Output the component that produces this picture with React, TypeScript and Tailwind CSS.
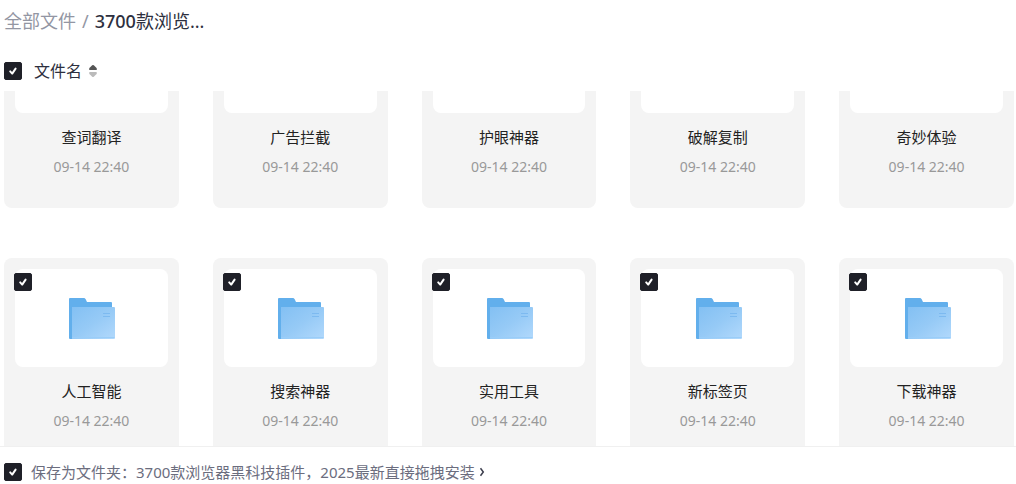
import { useLayoutEffect, useRef, useState } from 'react';

const FOLDERS = [
  '查词翻译', '广告拦截', '护眼神器', '破解复制', '奇妙体验',
  '人工智能', '搜索神器', '实用工具', '新标签页', '下载神器',
];

const SCROLL_START = 87;

interface CheckBoxProps {
  label: string;
  checked: boolean;
  onChange: (checked: boolean) => void;
}

function CheckBox({ label, checked, onChange }: CheckBoxProps) {
  return (
    <span className="relative block w-[18px] h-[18px] shrink-0">
      <input
        type="checkbox"
        aria-label={label}
        checked={checked}
        onChange={e => onChange(e.target.checked)}
        className="peer block w-full h-full appearance-none rounded-xs border border-[#c4c6cf] bg-white checked:border-[#1f2028] checked:bg-[#1f2028]"
      />
      <svg viewBox="0 0 18 18" fill="none" className="absolute inset-0 hidden peer-checked:block pointer-events-none">
        <path d="M6.2 9.4 8.2 11.6 11.6 6.6" stroke="#fff" strokeWidth="2" strokeLinecap="round" strokeLinejoin="round" />
      </svg>
    </span>
  );
}

function FolderIcon() {
  return (
    <svg viewBox="-2 0 48 42" className="w-12 h-[42px]" aria-hidden="true">
      <defs>
        <linearGradient id="folder-front" x1="0" y1="0" x2="1" y2="1">
          <stop offset="0" stopColor="#83c0f3" />
          <stop offset="0.5" stopColor="#96caf6" />
          <stop offset="1" stopColor="#b2d9fc" />
        </linearGradient>
      </defs>
      <path d="M0 2a1 1 0 0 1 1-1h13.500c1 0 1.700.4 2.200 1.300L18 5H42a1 1 0 0 1 1 1v36H1a1 1 0 0 1-1-1z" fill="#62afec" />
      <path d="M3 10h42a1 1 0 0 1 1 1v30a1 1 0 0 1-1 1H3z" fill="url(#folder-front)" />
      <path d="M3 40.500h42.500" stroke="#9acdf8" />
      <path d="M34 16.500h7M34 19.500h7" stroke="#7dbaf0" />
    </svg>
  );
}

function FolderCard({ name }: { name: string }) {
  const [checked, setChecked] = useState(true);

  return (
    <li className="relative h-[204px] rounded-lg bg-[#f4f4f4] px-[11px] pt-[11px] text-center">
      <div className="absolute left-[10px] top-[15px]">
        <CheckBox label={name} checked={checked} onChange={setChecked} />
      </div>
      <div className="h-[98px] rounded-lg bg-white flex items-center justify-center">
        <FolderIcon />
      </div>
      <p className="mt-3 text-[15px] leading-6 text-[#222]">{name}</p>
      <p className="mt-1.5 text-sm leading-6 text-[#999]">09-14 22:40</p>
    </li>
  );
}

export default function App() {
  const listRef = useRef<HTMLDivElement>(null);
  const [allChecked, setAllChecked] = useState(true);
  const [saveAsFolder, setSaveAsFolder] = useState(true);

  useLayoutEffect(() => {
    if (listRef.current) listRef.current.scrollTop = SCROLL_START;
  }, []);

  return (
    <div className="h-screen flex flex-col bg-white font-['Noto_Sans','Noto_Sans_CJK_SC',sans-serif]">
      <nav className="flex items-center gap-1.5 px-1 pt-[7px] pb-px text-lg leading-7">
        <a href="#all" className="text-[#9396a3]">全部文件</a>
        <span className="text-[#9396a3]">/</span>
        <span className="text-[#2d2f3e]"><b className="font-medium">3700</b>款浏览...</span>
      </nav>

      <div className="flex items-center px-1 pt-[23px] pb-2">
        <CheckBox label="全选" checked={allChecked} onChange={setAllChecked} />
        <button className="ml-3 flex items-center gap-[7px] text-base leading-6 text-[#2d2f3e]">
          文件名
          <svg viewBox="0 0 8 12" className="w-2 h-3" aria-hidden="true">
            <path d="M3.200.3Q4-.2 4.800.3L7.600 3Q8.300 5 7 5H1Q-.3 5 .4 3z" fill="#555" />
            <path d="M3.200 11.700Q4 12.200 4.800 11.700L7.600 9Q8.300 7 7 7H1Q-.3 7 .4 9z" fill="#bbb" />
          </svg>
        </button>
      </div>

      <div ref={listRef} className="flex-1 min-h-0 overflow-y-auto [scrollbar-width:none]">
        <ul className="grid grid-cols-5 gap-x-[34px] gap-y-[50px] pl-1 pr-0.5 pb-6">
          {FOLDERS.map(name => <FolderCard key={name} name={name} />)}
        </ul>
      </div>

      <footer className="flex items-center border-t border-[#f0f0f0] px-1 pt-[15px] pb-0.5 text-[15px] leading-5 text-[#6b6d7e]">
        <CheckBox label="保存为文件夹" checked={saveAsFolder} onChange={setSaveAsFolder} />
        <button className="ml-[9px] flex items-center gap-1 whitespace-nowrap">
          保存为文件夹：3700款浏览器黑科技插件，2025最新直接拖拽安装
          <svg viewBox="0 0 6 10" fill="none" className="w-1.5 h-2.5" aria-hidden="true">
            <path d="M1.500 1.200 4.300 5 1.500 8.800" stroke="#3c3e4d" strokeWidth="1.500" />
          </svg>
        </button>
      </footer>
    </div>
  );
}
